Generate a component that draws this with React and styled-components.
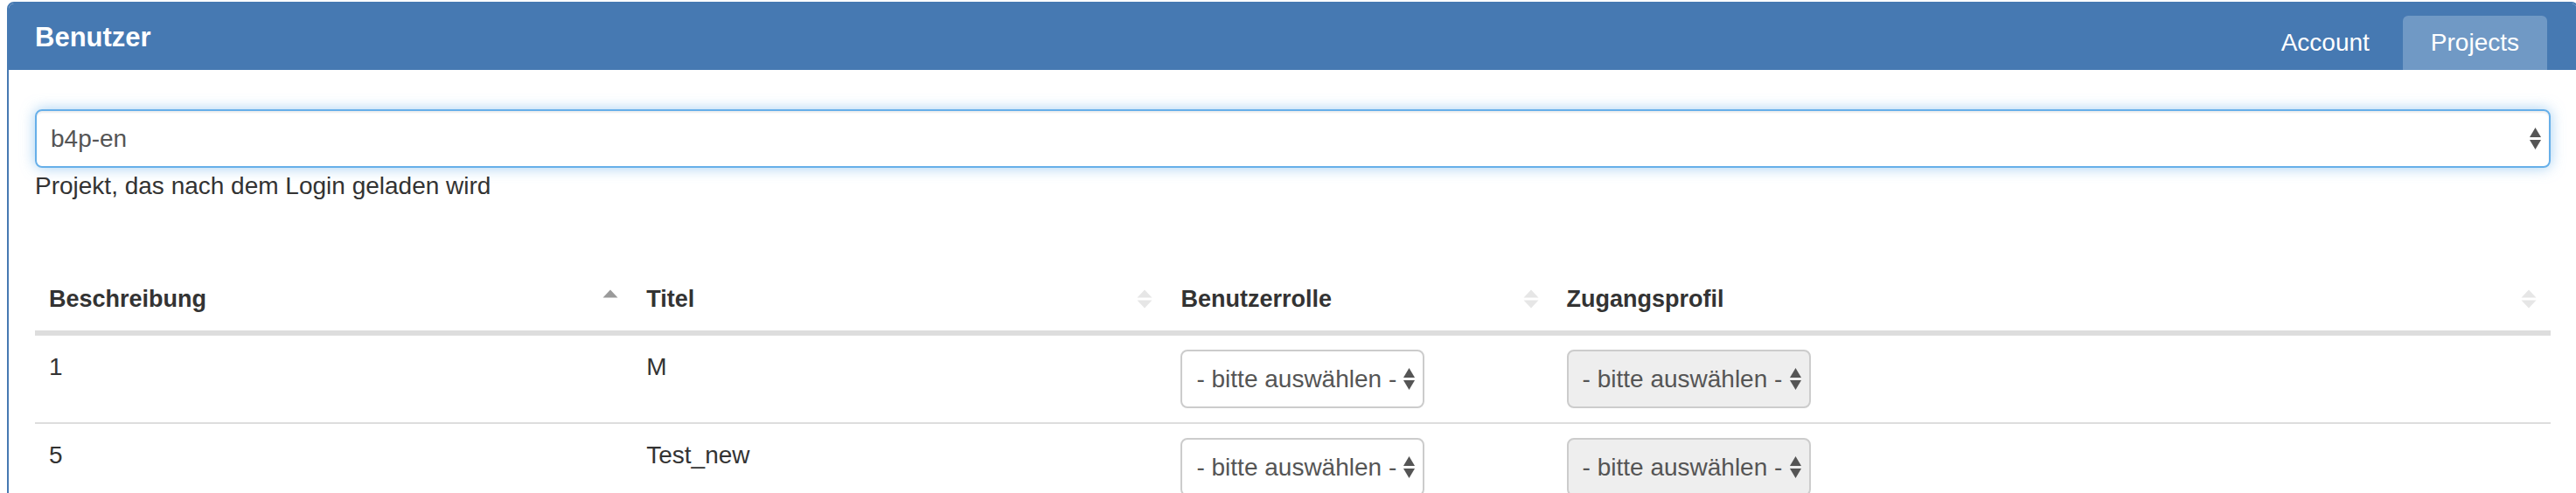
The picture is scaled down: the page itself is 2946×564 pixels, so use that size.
import React from "react";
import styled, { createGlobalStyle } from "styled-components";

const GlobalStyle = createGlobalStyle`
	html, body {
		margin: 0;
		padding: 0;
		background: #fff;
		overflow: hidden;
	}
	body {
		font-family: "Liberation Sans", Arial, sans-serif;
		font-size: 28px;
		line-height: 40px;
		color: #333;
	}
`;

const columns = [
	{ key: "desc", label: "Beschreibung", width: 683, sort: "asc" },
	{ key: "title", label: "Titel", width: 611, sort: "both" },
	{ key: "role", label: "Benutzerrolle", width: 441, sort: "both" },
	{ key: "profile", label: "Zugangsprofil", width: 1141, sort: "both" },
];

const rows = [
	{ id: 1, desc: "1", title: "M" },
	{ id: 5, desc: "5", title: "Test_new" },
];

const SortIcon = ({ mode }) => (
	<StyledSortIcon width="18" height="22" viewBox="0 0 18 22">
		<path
			d="M9 0.5 L17.5 9.5 L0.5 9.5 Z"
			fill={mode === "asc" ? "#9a9a9a" : "#e6e6e6"}
		/>
		{mode === "both" && <path d="M0.5 12.5 L17.5 12.5 L9 21.5 Z" fill="#e6e6e6" />}
	</StyledSortIcon>
);

const SelectArrows = () => (
	<svg width="13" height="25" viewBox="0 0 13 25">
		<path d="M6.5 0 L13 11 L0 11 Z" fill="#555" />
		<path d="M0 14 L13 14 L6.5 25 Z" fill="#555" />
	</svg>
);

const CellSelect = ({ disabled }) => (
	<StyledCellSelect $disabled={disabled}>
		<span>- bitte auswählen -</span>
		<SelectArrows />
	</StyledCellSelect>
);

export default function App() {
	return (
		<>
			<GlobalStyle />
			<StyledPanel>
				<StyledHeading>
					<StyledTitle>Benutzer</StyledTitle>
					<StyledTabs>
						<StyledTab>Account</StyledTab>
						<StyledTab $active>Projects</StyledTab>
					</StyledTabs>
				</StyledHeading>
				<StyledBody>
					<StyledProjectSelect>
						<span>b4p-en</span>
						<SelectArrows />
					</StyledProjectSelect>
					<StyledHelp>Projekt, das nach dem Login geladen wird</StyledHelp>
					<StyledTable>
						<colgroup>
							{columns.map((c) => (
								<col key={c.key} style={{ width: c.width }} />
							))}
						</colgroup>
						<thead>
							<tr>
								{columns.map((c) => (
									<StyledTh key={c.key}>
										<StyledThInner>
											<span>{c.label}</span>
											<SortIcon mode={c.sort} />
										</StyledThInner>
									</StyledTh>
								))}
							</tr>
						</thead>
						<tbody>
							{rows.map((r) => (
								<tr key={r.id}>
									<StyledTd>{r.desc}</StyledTd>
									<StyledTd>{r.title}</StyledTd>
									<StyledTd>
										<CellSelect />
									</StyledTd>
									<StyledTd>
										<CellSelect disabled />
									</StyledTd>
								</tr>
							))}
						</tbody>
					</StyledTable>
				</StyledBody>
			</StyledPanel>
		</>
	);
}

const StyledPanel = styled.section`
	margin: 2px -3px 0 8px;
	border: 2px solid #4679b2;
	border-radius: 8px 8px 0 0;
	background: #fff;
`;

const StyledHeading = styled.header`
	display: flex;
	justify-content: space-between;
	height: 76px;
	padding: 0 30px;
	background: #4679b2;
	border-radius: 6px 6px 0 0;
`;

const StyledTitle = styled.h3`
	align-self: center;
	margin: 0;
	font-size: 31px;
	font-weight: 700;
	line-height: 1;
	color: #fff;
`;

const StyledTabs = styled.nav`
	display: flex;
	align-self: flex-end;
	gap: 6px;
	margin-right: 4px;
`;

const StyledTab = styled.div`
	height: 62px;
	padding: 0 32px;
	line-height: 62px;
	font-size: 28px;
	color: #fff;
	border-radius: 6px 6px 0 0;
	background: ${(p) => (p.$active ? "#7099c5" : "transparent")};
`;

const StyledBody = styled.div`
	padding: 45px 30px 0;
`;

const StyledProjectSelect = styled.div`
	display: flex;
	align-items: center;
	justify-content: space-between;
	height: 67px;
	box-sizing: border-box;
	padding: 0 9px 0 16px;
	border: 2px solid #66afe9;
	border-radius: 8px;
	box-shadow: inset 0 2px 2px rgba(0, 0, 0, 0.075),
		0 0 16px rgba(102, 175, 233, 0.6);
	color: #555;
	font-size: 28px;
`;

const StyledHelp = styled.p`
	margin: 1px 0 0;
	line-height: 40px;
	color: #333;
`;

const StyledTable = styled.table`
	width: 100%;
	margin-top: 73px;
	border-collapse: separate;
	border-spacing: 0;
	table-layout: fixed;
`;

const StyledTh = styled.th`
	padding: 16px;
	border-bottom: 4px solid #ddd;
	text-align: left;
	vertical-align: bottom;
	font-size: 27px;
	font-weight: 700;
	color: #333;
`;

const StyledThInner = styled.div`
	display: flex;
	align-items: center;
	justify-content: space-between;
`;

const StyledSortIcon = styled.svg`
	flex: none;
	margin-right: 0;
`;

const StyledTd = styled.td`
	padding: 16px;
	border-top: 2px solid #ddd;
	vertical-align: top;
	font-size: 28px;
	color: #333;
`;

const StyledCellSelect = styled.div`
	display: flex;
	align-items: center;
	justify-content: space-between;
	width: 279px;
	height: 67px;
	box-sizing: border-box;
	padding: 0 9px 0 16px;
	border: 2px solid #ccc;
	border-radius: 8px;
	background: ${(p) => (p.$disabled ? "#eee" : "#fff")};
	color: #555;
	font-size: 28px;
`;
